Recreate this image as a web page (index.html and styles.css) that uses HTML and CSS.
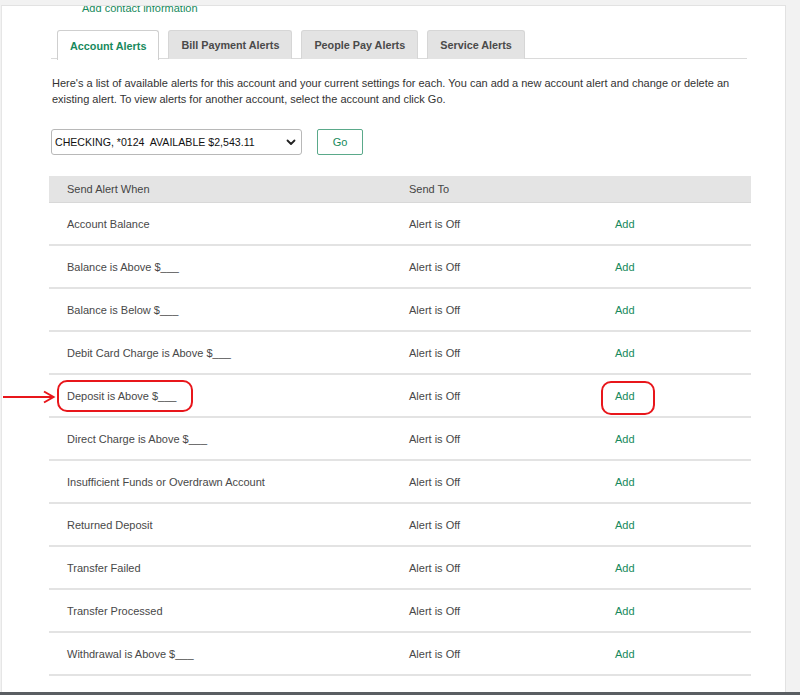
FILE: index.html
```html
<!DOCTYPE html>
<html>
<head>
<meta charset="utf-8">
<link rel="stylesheet" href="styles.css">
</head>
<body>
<div class="page">
  <div class="frame">
    <div class="contact">Add contact information</div>
    <div class="tabs">
      <div class="tab active">Account Alerts</div>
      <div class="tab">Bill Payment Alerts</div>
      <div class="tab">People Pay Alerts</div>
      <div class="tab">Service Alerts</div>
    </div>
    <p class="desc">Here's a list of available alerts for this account and your current settings for each. You can add a new account alert and change or delete an existing alert. To view alerts for another account, select the account and click Go.</p>
    <div class="picker">
      <div class="select">
        <span>CHECKING, *0124&nbsp; AVAILABLE $2,543.11</span>
        <svg class="chev" width="10" height="7" viewBox="0 0 10 7"><path d="M1.5 1.5 L5 5 L8.5 1.5" fill="none" stroke="#222" stroke-width="1.8" stroke-linecap="round" stroke-linejoin="round"/></svg>
      </div>
      <div class="go">Go</div>
    </div>
    <div class="table">
      <div class="row head"><div class="cell">Send Alert When</div><div class="cell">Send To</div><div class="cell"></div></div>
      <div class="row"><div class="cell">Account Balance</div><div class="cell">Alert is Off</div><div class="cell add">Add</div></div>
      <div class="row"><div class="cell">Balance is Above $___</div><div class="cell">Alert is Off</div><div class="cell add">Add</div></div>
      <div class="row"><div class="cell">Balance is Below $___</div><div class="cell">Alert is Off</div><div class="cell add">Add</div></div>
      <div class="row"><div class="cell">Debit Card Charge is Above $___</div><div class="cell">Alert is Off</div><div class="cell add">Add</div></div>
      <div class="row"><div class="cell">Deposit is Above $___</div><div class="cell">Alert is Off</div><div class="cell add">Add</div></div>
      <div class="row"><div class="cell">Direct Charge is Above $___</div><div class="cell">Alert is Off</div><div class="cell add">Add</div></div>
      <div class="row"><div class="cell">Insufficient Funds or Overdrawn Account</div><div class="cell">Alert is Off</div><div class="cell add">Add</div></div>
      <div class="row"><div class="cell">Returned Deposit</div><div class="cell">Alert is Off</div><div class="cell add">Add</div></div>
      <div class="row"><div class="cell">Transfer Failed</div><div class="cell">Alert is Off</div><div class="cell add">Add</div></div>
      <div class="row"><div class="cell">Transfer Processed</div><div class="cell">Alert is Off</div><div class="cell add">Add</div></div>
      <div class="row"><div class="cell">Withdrawal is Above $___</div><div class="cell">Alert is Off</div><div class="cell add">Add</div></div>
    </div>
  </div>
  <div class="bottombar"></div>
  <svg class="arrow" width="54" height="14" viewBox="0 0 54 14"><path d="M1 7 H51" stroke="#e8161b" stroke-width="2" fill="none"/><path d="M42 1.5 L51.5 7 L42 12.5" stroke="#e8161b" stroke-width="2" fill="none" stroke-linejoin="miter"/></svg>
  <div class="ring ring-a"></div>
  <div class="ring ring-b"></div>
</div>
</body>
</html>
```
FILE: styles.css
```css
html, body {
  margin: 0;
  padding: 0;
  width: 800px;
  height: 695px;
  overflow: hidden;
  background: #f2f2f2;
  font-family: "Liberation Sans", Arial, Helvetica, sans-serif;
}
.page {
  position: relative;
  width: 800px;
  height: 695px;
  padding-top: 5px;
  box-sizing: border-box;
}
.frame {
  width: 785px;
  height: 687px;
  margin-left: 1px;
  background: #fff;
  border-top: 1px solid #e2e2e2;
  border-left: 1px solid #e6e6e6;
  border-right: 1px solid #e2e2e2;
  box-sizing: border-box;
  overflow: hidden;
}
.contact {
  margin-top: -5px;
  margin-left: 80px;
  font-size: 11px;
  line-height: 14px;
  color: #17895c;
}
.tabs {
  display: flex;
  gap: 9px;
  margin-top: 15px;
  margin-left: 49px;
  width: 696px;
  padding-left: 6px;
  box-sizing: border-box;
  border-bottom: 1px solid #dadada;
  height: 29px;
}
.tab {
  height: 29px;
  box-sizing: border-box;
  padding: 0 12px;
  display: flex;
  align-items: center;
  font-size: 10.8px;
  font-weight: bold;
  color: #4a4a4a;
  background: #e3e3e3;
  border: 1px solid #d6d6d6;
  border-bottom: none;
  border-radius: 3px 3px 0 0;
}
.tab.active {
  background: #fff;
  color: #17895c;
  border-color: #cfcfcf;
  height: 30px;
  margin-bottom: -1px;
}
.desc {
  margin: 16px 0 0 50px;
  width: 700px;
  font-size: 11px;
  line-height: 16px;
  color: #333;
}
.picker {
  display: flex;
  gap: 15px;
  margin: 22px 0 0 49px;
}
.select {
  width: 251px;
  height: 26px;
  box-sizing: border-box;
  border: 1px solid #b8b8b8;
  border-radius: 3px;
  display: flex;
  align-items: center;
  justify-content: space-between;
  padding: 0 5px 0 3px;
  font-size: 10.6px;
  color: #111;
}
.chev { display: block; }
.go {
  width: 46px;
  height: 26px;
  box-sizing: border-box;
  border: 1px solid #5aa98a;
  border-radius: 2px;
  display: flex;
  align-items: center;
  justify-content: center;
  font-size: 11px;
  color: #17895c;
}
.table {
  margin: 21px 0 0 47px;
  width: 702px;
}
.row {
  display: grid;
  grid-template-columns: 342px 206px 1fr;
  height: 43px;
  align-items: center;
  border-bottom: 2px solid #e3e3e3;
  box-sizing: border-box;
  font-size: 11px;
  color: #484848;
}
.row.head {
  height: 27px;
  background: #e4e4e4;
  border-bottom: 1px solid #d8d8d8;
  color: #444;
}
.cell {
  padding-left: 18px;
}
.cell.add {
  color: #17895c;
}
.bottombar {
  height: 3px;
  background: #5a5e62;
}
.arrow {
  position: absolute;
  left: 2px;
  top: 390px;
}
.ring {
  position: absolute;
  border: 2px solid #e8161b;
  border-radius: 10px;
  box-sizing: border-box;
}
.ring-a {
  left: 57px;
  top: 380px;
  width: 136px;
  height: 32px;
}
.ring-b {
  left: 601px;
  top: 381px;
  width: 54px;
  height: 34px;
}
```
